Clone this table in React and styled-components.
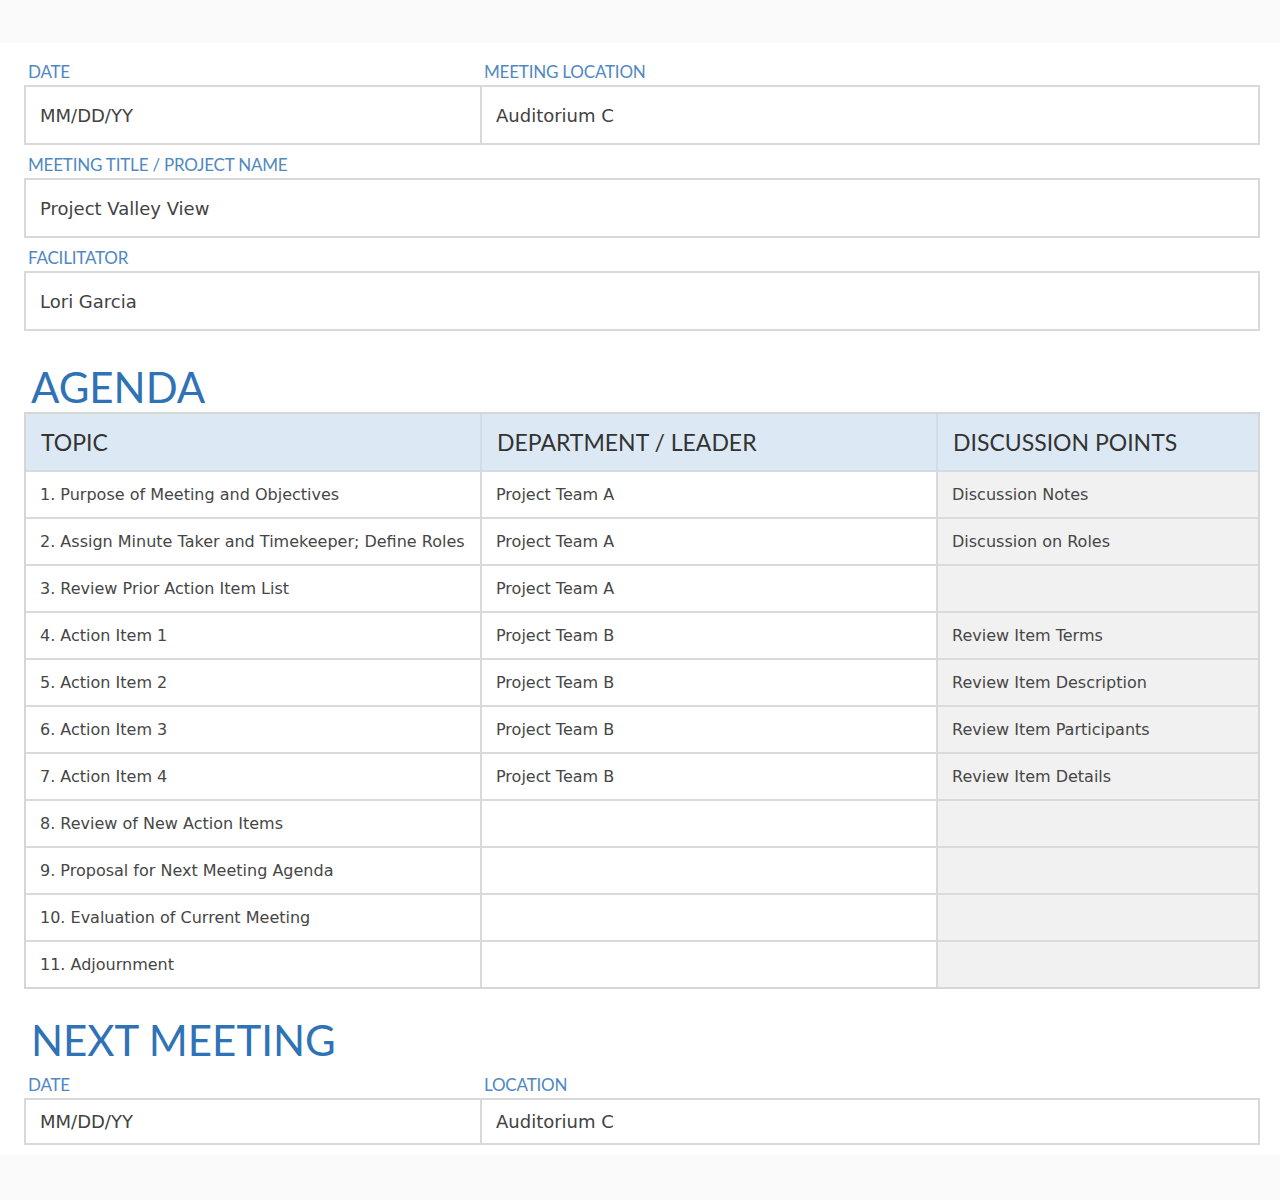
import React from 'react'
import styled, { createGlobalStyle } from 'styled-components'

const GlobalStyle = createGlobalStyle`
  html, body {
    margin: 0;
    padding: 0;
    background: #fafafa;
  }
  body {
    font-family: 'DejaVu Sans', 'Lato', sans-serif;
    color: #444444;
  }
`

const Page = styled.div`
  min-height: 1200px;
  padding-top: 43px;
  box-sizing: border-box;
`

const Sheet = styled.div`
  background: #ffffff;
  padding: 9px 20px 10px 24px;
`

const FieldRow = styled.div`
  display: grid;
  grid-template-columns: ${(props) => (props.split ? '456px 1fr' : '1fr')};
`

const FieldLabel = styled.div`
  height: 33px;
  display: flex;
  align-items: flex-end;
  padding: 0 0 3px 4px;
  box-sizing: border-box;
  font-family: 'Lato', sans-serif;
  font-size: 17px;
  letter-spacing: -0.2px;
  color: #4f88c2;
  text-transform: uppercase;
`

const FieldBox = styled.div`
  display: grid;
  grid-template-columns: ${(props) => (props.split ? '454px 1fr' : '1fr')};
  height: ${(props) => props.height || 60}px;
  border: 2px solid #d9d9d9;
  box-sizing: border-box;
`

const FieldValue = styled.div`
  display: flex;
  align-items: center;
  padding-left: 14px;
  font-size: 18px;
  color: #424242;
  & + & {
    border-left: 2px solid #d9d9d9;
  }
`

const Heading = styled.h2`
  margin: 0;
  height: ${(props) => props.height}px;
  display: flex;
  align-items: flex-end;
  padding: 0 0 4px 7px;
  box-sizing: border-box;
  font-family: 'Lato', sans-serif;
  font-size: 42px;
  font-weight: 400;
  line-height: 1;
  color: #2f72b6;
`

const Table = styled.div`
  border: 2px solid #d6d6d6;
  display: grid;
  grid-template-columns: 454px 456px 1fr;
`

const HeadCell = styled.div`
  height: 58px;
  box-sizing: border-box;
  display: flex;
  align-items: center;
  padding-left: 15px;
  background: #dce9f5;
  font-family: 'Lato', sans-serif;
  font-size: 23px;
  color: #333333;
  border-bottom: 2px solid #d2dce6;
  border-left: ${(props) => (props.first ? 'none' : '2px solid #d2dce6')};
`

const Cell = styled.div`
  height: ${(props) => (props.last ? 45 : 47)}px;
  display: flex;
  align-items: center;
  padding-left: 14px;
  box-sizing: border-box;
  font-size: 16px;
  color: #464646;
  white-space: nowrap;
  background: ${(props) => (props.shade ? '#f1f1f1' : '#ffffff')};
  border-left: ${(props) => (props.first ? 'none' : '2px solid #dadada')};
  border-bottom: ${(props) => (props.last ? 'none' : '2px solid #dadada')};
`

const rows = [
  ['1. Purpose of Meeting and Objectives', 'Project Team A', 'Discussion Notes'],
  ['2. Assign Minute Taker and Timekeeper; Define Roles', 'Project Team A', 'Discussion on Roles'],
  ['3. Review Prior Action Item List', 'Project Team A', ''],
  ['4. Action Item 1', 'Project Team B', 'Review Item Terms'],
  ['5. Action Item 2', 'Project Team B', 'Review Item Description'],
  ['6. Action Item 3', 'Project Team B', 'Review Item Participants'],
  ['7. Action Item 4', 'Project Team B', 'Review Item Details'],
  ['8. Review of New Action Items', '', ''],
  ['9. Proposal for Next Meeting Agenda', '', ''],
  ['10. Evaluation of Current Meeting', '', ''],
  ['11. Adjournment', '', ''],
]

function Field({ labels, values, height }) {
  const split = labels.length > 1
  return (
    <>
      <FieldRow split={split}>
        {labels.map((l) => (
          <FieldLabel key={l}>{l}</FieldLabel>
        ))}
      </FieldRow>
      <FieldBox split={split} height={height}>
        {values.map((v) => (
          <FieldValue key={v}>{v}</FieldValue>
        ))}
      </FieldBox>
    </>
  )
}

export default function App() {
  return (
    <Page>
      <GlobalStyle />
      <Sheet>
        <Field labels={['Date', 'Meeting Location']} values={['MM/DD/YY', 'Auditorium C']} />
        <Field labels={['Meeting Title / Project Name']} values={['Project Valley View']} />
        <Field labels={['Facilitator']} values={['Lori Garcia']} />

        <Heading height={81}>AGENDA</Heading>
        <Table>
          <HeadCell first>TOPIC</HeadCell>
          <HeadCell>DEPARTMENT / LEADER</HeadCell>
          <HeadCell>DISCUSSION POINTS</HeadCell>
          {rows.map((r, i) => {
            const last = i === rows.length - 1
            return (
              <React.Fragment key={r[0]}>
                <Cell first last={last}>{r[0]}</Cell>
                <Cell last={last}>{r[1]}</Cell>
                <Cell shade last={last}>{r[2]}</Cell>
              </React.Fragment>
            )
          })}
        </Table>

        <Heading height={76}>NEXT MEETING</Heading>
        <Field labels={['Date', 'Location']} values={['MM/DD/YY', 'Auditorium C']} height={47} />
      </Sheet>
    </Page>
  )
}
